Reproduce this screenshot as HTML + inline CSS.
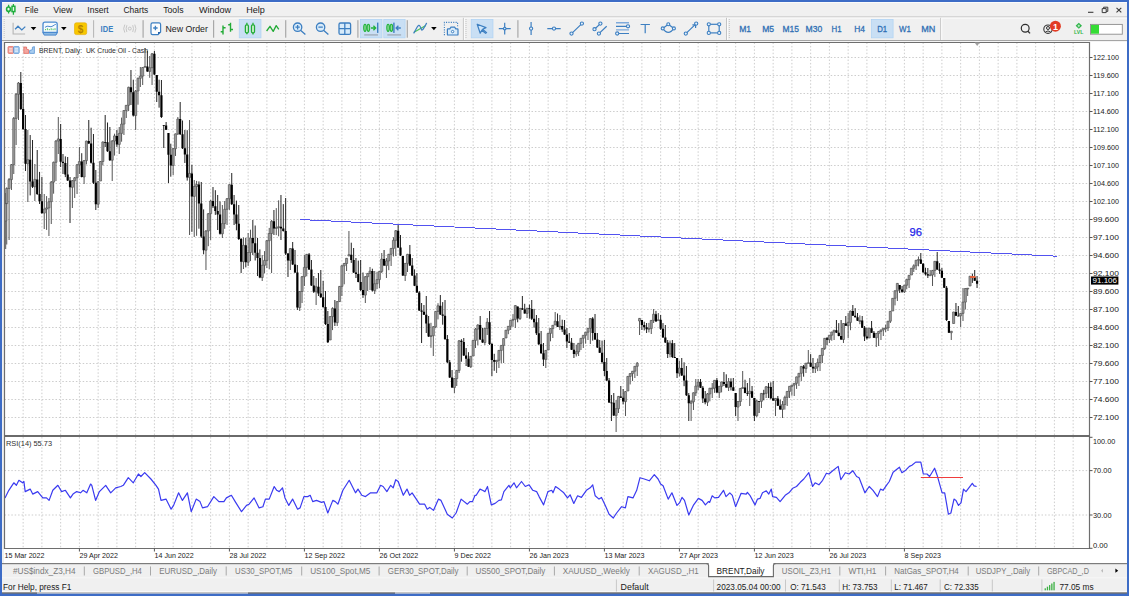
<!DOCTYPE html>
<html><head><meta charset="utf-8"><title>MT5</title>
<style>html,body{margin:0;padding:0;width:1129px;height:596px;overflow:hidden;background:#f0f0f0;font-family:"Liberation Sans", sans-serif;} svg{display:block;position:absolute;left:0;top:0;}</style>
</head><body>
<svg width="1129" height="596" viewBox="0 0 1129 596" font-family='"Liberation Sans", sans-serif'><rect x="0" y="0" width="1129" height="596" fill="#f0f0f0"/>
<rect x="2" y="2" width="1125" height="1" fill="#fbfbfb"/>
<rect x="2" y="16" width="1125" height="1.5" fill="#d6d6d6"/>
<rect x="2" y="17.5" width="1125" height="22.5" fill="#f0f0f0"/>
<rect x="2" y="17.8" width="1125" height="0.8" fill="#fcfcfc"/>
<rect x="2" y="40" width="1125" height="1.3" fill="#a5a5a5"/>
<rect x="2" y="41.3" width="1125" height="522" fill="#ffffff"/>
<rect x="2" y="41.3" width="2" height="522" fill="#f0f0f0"/>
<path d="M23.15 42.5V435M23.15 437V548.5M41.90 42.5V435M41.90 437V548.5M60.65 42.5V435M60.65 437V548.5M79.40 42.5V435M79.40 437V548.5M98.15 42.5V435M98.15 437V548.5M116.90 42.5V435M116.90 437V548.5M135.65 42.5V435M135.65 437V548.5M154.40 42.5V435M154.40 437V548.5M173.15 42.5V435M173.15 437V548.5M191.90 42.5V435M191.90 437V548.5M210.65 42.5V435M210.65 437V548.5M229.40 42.5V435M229.40 437V548.5M248.15 42.5V435M248.15 437V548.5M266.90 42.5V435M266.90 437V548.5M285.65 42.5V435M285.65 437V548.5M304.40 42.5V435M304.40 437V548.5M323.15 42.5V435M323.15 437V548.5M341.90 42.5V435M341.90 437V548.5M360.65 42.5V435M360.65 437V548.5M379.40 42.5V435M379.40 437V548.5M398.15 42.5V435M398.15 437V548.5M416.90 42.5V435M416.90 437V548.5M435.65 42.5V435M435.65 437V548.5M454.40 42.5V435M454.40 437V548.5M473.15 42.5V435M473.15 437V548.5M491.90 42.5V435M491.90 437V548.5M510.65 42.5V435M510.65 437V548.5M529.40 42.5V435M529.40 437V548.5M548.15 42.5V435M548.15 437V548.5M566.90 42.5V435M566.90 437V548.5M585.65 42.5V435M585.65 437V548.5M604.40 42.5V435M604.40 437V548.5M623.15 42.5V435M623.15 437V548.5M641.90 42.5V435M641.90 437V548.5M660.65 42.5V435M660.65 437V548.5M679.40 42.5V435M679.40 437V548.5M698.15 42.5V435M698.15 437V548.5M716.90 42.5V435M716.90 437V548.5M735.65 42.5V435M735.65 437V548.5M754.40 42.5V435M754.40 437V548.5M773.15 42.5V435M773.15 437V548.5M791.90 42.5V435M791.90 437V548.5M810.65 42.5V435M810.65 437V548.5M829.40 42.5V435M829.40 437V548.5M848.15 42.5V435M848.15 437V548.5M866.90 42.5V435M866.90 437V548.5M885.65 42.5V435M885.65 437V548.5M904.40 42.5V435M904.40 437V548.5M923.15 42.5V435M923.15 437V548.5M941.90 42.5V435M941.90 437V548.5M960.65 42.5V435M960.65 437V548.5M979.40 42.5V435M979.40 437V548.5M998.15 42.5V435M998.15 437V548.5M1016.90 42.5V435M1016.90 437V548.5M1035.65 42.5V435M1035.65 437V548.5M1054.40 42.5V435M1054.40 437V548.5M1073.15 42.5V435M1073.15 437V548.5M4.5 57.50H1089.5M4.5 75.50H1089.5M4.5 93.50H1089.5M4.5 111.50H1089.5M4.5 129.50H1089.5M4.5 147.50H1089.5M4.5 165.50H1089.5M4.5 183.50H1089.5M4.5 201.50H1089.5M4.5 219.50H1089.5M4.5 237.50H1089.5M4.5 255.50H1089.5M4.5 273.50H1089.5M4.5 291.50H1089.5M4.5 309.50H1089.5M4.5 327.50H1089.5M4.5 345.50H1089.5M4.5 363.50H1089.5M4.5 381.50H1089.5M4.5 399.50H1089.5M4.5 417.50H1089.5M4.5 470.6H1089.5M4.5 515.0H1089.5" stroke="#cdcdcd" stroke-width="1" stroke-dasharray="1.5 1.9" fill="none"/>
<path d="M5.70 193.0V249.0M6.74 187.3V244.5M9.09 178.0V240.0M11.43 164.0V190.0M13.78 117.0V174.0M16.12 93.0V145.0M18.46 82.0V120.0M27.84 130.0V202.0M34.87 164.0V201.0M44.24 194.0V229.0M46.59 196.1V229.9M48.93 198.0V236.0M51.27 181.0V224.0M53.62 161.6V193.7M55.96 140.0V181.0M58.31 117.0V154.0M72.37 180.0V208.0M74.71 177.0V198.0M77.06 164.0V194.0M79.40 147.0V174.0M84.09 160.0V184.0M86.43 140.7V164.4M98.15 181.0V208.0M100.49 161.0V181.0M102.84 141.4V165.4M112.21 140.0V181.0M114.56 133.7V155.6M119.24 127.0V154.0M121.59 117.6V141.7M123.93 110.0V135.0M126.28 105.0V118.0M128.62 86.7V111.0M135.65 90.0V130.0M137.99 77.6V104.7M140.34 67.0V87.0M142.68 67.0V85.0M145.03 48.0V67.0M149.71 56.0V77.8M152.06 53.0V85.0M173.15 148.0V175.0M175.49 133.5V156.0M177.84 117.0V135.0M189.56 120.0V235.0M194.24 180.0V237.0M196.59 180.9V235.8M205.96 230.0V270.0M208.31 213.0V246.2M210.65 200.0V240.0M222.37 205.0V238.0M224.71 201.0V228.8M227.06 198.0V225.0M229.40 184.2V209.9M243.46 237.4V269.0M248.15 233.0V266.0M250.49 229.7V261.1M262.21 255.0V281.0M264.56 251.1V273.4M266.90 240.0V268.0M269.24 227.9V269.3M271.59 220.0V273.0M276.27 208.1V235.1M278.62 200.3V236.3M290.34 248.0V270.0M299.71 291.0V311.0M302.06 276.0V303.0M304.40 255.0V286.0M306.74 253.9V276.3M316.12 278.0V305.0M330.18 316.0V340.0M332.52 307.3V330.1M337.21 301.0V326.0M339.56 286.0V302.0M341.90 265.0V296.0M344.24 262.9V284.3M346.59 258.0V271.0M348.93 231.0V256.0M365.34 276.0V303.0M367.68 273.0V291.0M370.02 267.0V290.0M374.71 271.0V294.0M377.06 271.8V289.1M379.40 271.0V288.0M381.74 253.0V273.0M386.43 258.0V278.0M388.77 253.9V270.2M391.12 248.0V266.0M393.46 237.2V256.5M395.81 230.0V256.0M405.18 263.0V281.0M407.52 253.9V272.0M430.96 322.8V347.8M433.31 326.0V356.0M435.65 311.0V328.0M437.99 303.2V319.4M454.40 378.0V393.0M456.74 370.0V386.0M459.09 340.0V373.0M470.81 356.0V368.0M473.15 340.0V356.0M475.49 328.0V348.0M477.84 324.2V345.1M484.87 328.0V345.0M487.21 318.0V335.0M496.59 360.0V373.0M498.93 350.0V368.0M501.27 345.0V363.2M503.62 338.0V363.0M505.96 330.0V338.0M508.31 326.1V334.2M510.65 320.0V330.0M512.99 314.1V326.9M515.34 305.0V328.0M520.02 308.0V320.0M527.06 308.0V318.0M545.81 350.0V368.0M548.15 333.0V350.0M550.49 328.3V341.3M552.84 325.0V338.0M555.18 312.0V325.0M559.87 315.0V330.0M576.27 344.7V356.5M578.62 343.0V356.0M580.96 338.0V350.0M583.31 335.0V348.0M585.65 331.9V343.7M587.99 328.0V340.0M590.34 318.0V344.0M616.12 400.0V432.0M618.46 396.0V413.0M625.49 391.0V416.0M627.84 376.0V391.0M630.18 373.1V384.4M632.52 371.0V381.0M634.87 366.0V378.0M637.21 362.0V376.0M639.56 318.0V335.0M648.93 322.9V332.4M651.27 320.0V334.0M653.62 309.0V323.0M658.31 313.0V320.0M670.02 340.5V357.4M679.40 360.7V376.4M691.12 400.0V421.0M693.46 392.4V410.0M695.81 379.0V396.0M698.15 379.0V390.1M707.52 393.0V406.0M709.87 387.9V401.3M712.21 383.0V398.0M714.56 380.0V392.9M719.24 386.0V398.0M721.59 381.6V392.4M728.62 378.0V391.0M737.99 401.0V421.0M740.34 388.0V406.0M742.68 371.0V388.0M749.71 378.0V406.0M756.74 399.8V417.0M761.43 393.0V408.0M766.12 386.0V398.0M775.49 398.0V416.0M782.52 401.0V418.0M784.87 395.7V409.6M787.21 391.0V406.0M789.56 386.0V398.0M791.90 384.8V395.7M794.24 383.0V396.0M796.59 376.6V388.9M798.93 373.0V386.0M801.27 366.0V381.0M805.96 363.0V373.0M808.31 350.0V363.0M815.34 363.0V373.0M817.68 358.5V371.1M820.02 355.0V371.0M822.37 348.0V363.0M824.71 338.0V350.0M829.40 335.0V343.0M831.74 331.8V340.7M834.09 330.0V340.0M843.46 323.0V343.0M848.15 313.0V338.0M850.49 310.7V330.2M859.87 315.4V324.2M869.24 328.0V338.0M876.27 333.0V347.0M878.62 331.0V346.0M880.96 329.7V340.0M883.31 328.0V336.0M885.65 324.6V332.0M887.99 321.0V331.0M890.34 311.0V323.0M892.68 298.0V311.0M895.02 290.4V305.4M897.37 283.0V301.0M904.40 285.0V293.0M906.74 278.7V289.3M909.09 275.0V288.0M911.43 268.0V275.0M913.77 264.3V272.0M916.12 260.0V270.0M918.46 256.5V266.3M930.18 270.0V275.0M932.52 270.0V286.0M934.87 261.0V276.9M951.27 331.0V340.0M953.62 311.8V323.5M960.65 313.0V327.0M962.99 288.0V321.0M965.34 288.1V309.5M967.68 288.0V296.0M970.02 276.0V286.0" stroke="#555" stroke-width="1" fill="none"/>
<path d="M4.65 203.6h2.1V221.0h-2.1zM5.69 188.5h2.1V203.6h-2.1zM8.04 179.6h2.1V188.5h-2.1zM10.38 164.7h2.1V179.6h-2.1zM12.72 118.4h2.1V164.7h-2.1zM15.07 94.3h2.1V118.4h-2.1zM17.41 83.0h2.1V94.3h-2.1zM26.79 159.7h2.1V163.8h-2.1zM33.82 179.4h2.1V186.8h-2.1zM43.19 209.1h2.1V213.1h-2.1zM45.54 207.9h2.1V209.1h-2.1zM47.88 201.7h2.1V207.9h-2.1zM50.23 182.1h2.1V201.7h-2.1zM52.57 162.3h2.1V182.1h-2.1zM54.91 141.0h2.1V162.3h-2.1zM57.26 138.9h2.1V141.0h-2.1zM71.32 180.7h2.1V187.3h-2.1zM73.66 177.8h2.1V180.7h-2.1zM76.01 164.8h2.1V177.8h-2.1zM78.35 161.6h2.1V164.8h-2.1zM83.04 160.6h2.1V176.9h-2.1zM85.38 141.1h2.1V160.6h-2.1zM97.10 181.7h2.1V204.2h-2.1zM99.44 161.5h2.1V181.0h-2.1zM101.79 142.0h2.1V161.5h-2.1zM111.16 141.0h2.1V160.2h-2.1zM113.51 135.9h2.1V141.0h-2.1zM118.19 133.4h2.1V144.4h-2.1zM120.54 124.1h2.1V133.4h-2.1zM122.88 110.6h2.1V124.1h-2.1zM125.23 105.3h2.1V110.6h-2.1zM127.57 87.3h2.1V105.3h-2.1zM134.60 91.0h2.1V115.6h-2.1zM136.94 78.3h2.1V91.0h-2.1zM139.29 76.1h2.1V78.3h-2.1zM141.63 67.5h2.1V76.1h-2.1zM143.97 66.5h2.1V67.3h-2.1zM148.66 67.7h2.1V71.4h-2.1zM151.01 53.8h2.1V67.7h-2.1zM172.10 148.7h2.1V165.5h-2.1zM174.44 133.9h2.1V148.7h-2.1zM176.79 119.0h2.1V133.9h-2.1zM188.51 173.4h2.1V177.4h-2.1zM193.19 186.5h2.1V196.4h-2.1zM195.54 184.5h2.1V186.5h-2.1zM204.91 231.0h2.1V250.2h-2.1zM207.26 213.7h2.1V231.0h-2.1zM209.60 201.0h2.1V213.7h-2.1zM221.32 223.6h2.1V233.8h-2.1zM223.66 209.3h2.1V223.6h-2.1zM226.01 198.7h2.1V209.3h-2.1zM228.35 184.7h2.1V198.7h-2.1zM242.41 245.3h2.1V261.7h-2.1zM247.10 252.5h2.1V262.2h-2.1zM249.44 238.0h2.1V252.5h-2.1zM261.16 265.3h2.1V277.5h-2.1zM263.51 260.4h2.1V265.3h-2.1zM265.85 240.7h2.1V260.4h-2.1zM268.19 233.5h2.1V240.7h-2.1zM270.54 221.3h2.1V233.5h-2.1zM275.22 227.4h2.1V228.5h-2.1zM277.57 226.7h2.1V227.5h-2.1zM289.29 248.6h2.1V260.4h-2.1zM298.66 291.5h2.1V307.6h-2.1zM301.01 276.7h2.1V291.5h-2.1zM303.35 267.4h2.1V276.7h-2.1zM305.69 254.4h2.1V267.4h-2.1zM315.07 286.8h2.1V291.7h-2.1zM329.13 316.6h2.1V340.0h-2.1zM331.47 308.4h2.1V316.6h-2.1zM336.16 301.6h2.1V322.6h-2.1zM338.51 286.4h2.1V301.6h-2.1zM340.85 265.8h2.1V286.4h-2.1zM343.19 263.5h2.1V265.8h-2.1zM345.54 258.3h2.1V263.5h-2.1zM347.88 254.7h2.1V256.0h-2.1zM364.29 276.7h2.1V295.1h-2.1zM366.63 273.4h2.1V276.7h-2.1zM368.97 271.1h2.1V273.4h-2.1zM373.66 283.7h2.1V290.6h-2.1zM376.01 279.6h2.1V283.7h-2.1zM378.35 271.4h2.1V279.6h-2.1zM380.69 259.1h2.1V271.4h-2.1zM385.38 260.9h2.1V265.6h-2.1zM387.72 254.3h2.1V260.9h-2.1zM390.07 248.4h2.1V254.3h-2.1zM392.41 240.3h2.1V248.4h-2.1zM394.76 230.7h2.1V240.3h-2.1zM404.13 263.4h2.1V275.5h-2.1zM406.47 254.3h2.1V263.4h-2.1zM429.91 335.7h2.1V336.5h-2.1zM432.26 326.8h2.1V335.7h-2.1zM434.60 311.4h2.1V326.8h-2.1zM436.94 305.8h2.1V311.4h-2.1zM453.35 378.6h2.1V387.6h-2.1zM455.69 370.4h2.1V378.6h-2.1zM458.04 340.8h2.1V370.4h-2.1zM469.76 356.3h2.1V366.7h-2.1zM472.10 340.4h2.1V356.0h-2.1zM474.44 329.1h2.1V340.4h-2.1zM476.79 325.0h2.1V329.1h-2.1zM483.82 328.4h2.1V342.5h-2.1zM486.16 322.2h2.1V328.4h-2.1zM495.54 360.3h2.1V361.7h-2.1zM497.88 350.4h2.1V360.3h-2.1zM500.22 345.4h2.1V350.4h-2.1zM502.57 338.6h2.1V345.4h-2.1zM504.91 330.2h2.1V338.0h-2.1zM507.26 326.3h2.1V330.2h-2.1zM509.60 320.2h2.1V326.3h-2.1zM511.94 319.4h2.1V320.2h-2.1zM514.29 305.6h2.1V319.4h-2.1zM518.98 308.3h2.1V318.5h-2.1zM526.01 308.2h2.1V313.4h-2.1zM544.76 350.4h2.1V359.4h-2.1zM547.10 333.4h2.1V350.0h-2.1zM549.44 328.6h2.1V333.4h-2.1zM551.79 325.3h2.1V328.6h-2.1zM554.13 321.2h2.1V325.0h-2.1zM558.82 326.1h2.1V326.9h-2.1zM575.23 351.7h2.1V354.0h-2.1zM577.57 343.3h2.1V351.7h-2.1zM579.91 338.3h2.1V343.3h-2.1zM582.26 335.3h2.1V338.3h-2.1zM584.60 332.2h2.1V335.3h-2.1zM586.94 328.3h2.1V332.2h-2.1zM589.29 318.6h2.1V328.3h-2.1zM615.07 408.7h2.1V415.4h-2.1zM617.41 396.4h2.1V408.7h-2.1zM624.44 391.6h2.1V401.6h-2.1zM626.79 376.4h2.1V391.0h-2.1zM629.13 373.6h2.1V376.4h-2.1zM631.48 371.2h2.1V373.6h-2.1zM633.82 366.3h2.1V371.2h-2.1zM636.16 363.2h2.1V366.3h-2.1zM638.51 318.4h2.1V321.0h-2.1zM647.88 328.4h2.1V329.3h-2.1zM650.23 320.4h2.1V328.4h-2.1zM652.57 314.2h2.1V320.4h-2.1zM657.26 319.8h2.1V320.6h-2.1zM668.98 343.2h2.1V354.1h-2.1zM678.35 368.0h2.1V373.2h-2.1zM690.07 401.7h2.1V403.3h-2.1zM692.41 392.8h2.1V401.7h-2.1zM694.76 386.1h2.1V392.8h-2.1zM697.10 382.0h2.1V386.1h-2.1zM706.48 393.9h2.1V402.2h-2.1zM708.82 388.2h2.1V393.9h-2.1zM711.16 388.1h2.1V388.9h-2.1zM713.51 380.3h2.1V388.1h-2.1zM718.19 386.3h2.1V392.6h-2.1zM720.54 381.9h2.1V386.3h-2.1zM727.57 381.6h2.1V387.4h-2.1zM736.94 401.5h2.1V407.1h-2.1zM739.29 388.4h2.1V401.5h-2.1zM741.63 387.6h2.1V388.4h-2.1zM748.66 391.2h2.1V393.6h-2.1zM755.69 400.9h2.1V415.7h-2.1zM760.38 393.4h2.1V401.3h-2.1zM765.07 386.8h2.1V393.4h-2.1zM774.44 398.4h2.1V400.5h-2.1zM781.48 404.6h2.1V409.4h-2.1zM783.82 397.4h2.1V404.6h-2.1zM786.16 391.4h2.1V397.4h-2.1zM788.51 386.3h2.1V391.4h-2.1zM790.85 385.1h2.1V386.3h-2.1zM793.19 383.3h2.1V385.1h-2.1zM795.54 376.9h2.1V383.3h-2.1zM797.88 373.3h2.1V376.9h-2.1zM800.23 366.4h2.1V373.3h-2.1zM804.91 363.2h2.1V368.6h-2.1zM807.26 362.7h2.1V363.5h-2.1zM814.29 366.9h2.1V368.6h-2.1zM816.63 362.6h2.1V366.9h-2.1zM818.98 355.4h2.1V362.6h-2.1zM821.32 348.4h2.1V355.4h-2.1zM823.66 338.3h2.1V348.4h-2.1zM828.35 335.2h2.1V339.7h-2.1zM830.69 332.0h2.1V335.2h-2.1zM833.04 330.2h2.1V332.0h-2.1zM842.41 323.5h2.1V339.5h-2.1zM847.10 322.4h2.1V325.8h-2.1zM849.44 311.1h2.1V322.4h-2.1zM858.82 320.6h2.1V321.4h-2.1zM868.19 328.2h2.1V338.0h-2.1zM875.23 333.4h2.1V337.8h-2.1zM877.57 331.4h2.1V333.4h-2.1zM879.91 329.9h2.1V331.4h-2.1zM882.26 328.2h2.1V329.9h-2.1zM884.60 327.9h2.1V328.7h-2.1zM886.94 321.2h2.1V327.9h-2.1zM889.29 311.3h2.1V321.2h-2.1zM891.63 298.3h2.1V311.0h-2.1zM893.98 290.8h2.1V298.3h-2.1zM896.32 283.4h2.1V290.8h-2.1zM903.35 285.2h2.1V291.8h-2.1zM905.69 279.6h2.1V285.2h-2.1zM908.04 275.3h2.1V279.6h-2.1zM910.38 268.2h2.1V275.0h-2.1zM912.73 265.8h2.1V268.2h-2.1zM915.07 260.2h2.1V265.8h-2.1zM917.41 259.5h2.1V260.3h-2.1zM929.13 274.9h2.1V275.7h-2.1zM931.48 270.4h2.1V274.9h-2.1zM933.82 261.3h2.1V270.4h-2.1zM950.23 331.2h2.1V332.7h-2.1zM952.57 312.0h2.1V323.5h-2.1zM959.60 313.4h2.1V315.8h-2.1zM961.94 302.1h2.1V313.4h-2.1zM964.29 288.5h2.1V302.1h-2.1zM966.63 288.2h2.1V289.0h-2.1zM968.98 276.2h2.1V286.0h-2.1z" fill="#9c9c9c" stroke="#505050" stroke-width="0.65"/>
<path d="M20.81 72.0V110.0M23.15 93.0V130.0M25.49 115.0V171.0M30.18 135.0V195.4M32.52 140.0V188.0M37.21 150.0V195.0M39.56 171.9V204.0M41.90 177.0V214.0M60.65 124.0V167.0M62.99 154.0V174.0M65.34 156.4V177.1M67.68 157.0V181.0M70.03 177.0V223.0M81.74 153.2V177.4M88.78 120.0V144.0M91.12 127.7V163.6M93.46 134.0V184.0M95.81 170.0V210.0M105.18 115.0V147.0M107.53 122.5V151.9M109.87 127.0V161.0M116.90 130.0V147.0M130.96 70.0V105.0M133.31 79.7V116.5M147.37 50.8V71.9M154.40 51.0V75.0M156.74 75.0V102.0M159.09 79.7V107.7M161.43 80.0V118.0M163.78 125.0V148.0M166.12 122.0V130.0M168.46 133.0V183.0M170.81 143.7V176.7M180.18 102.0V135.0M182.53 120.5V149.0M184.87 130.0V163.0M187.21 130.2V180.6M191.90 164.7V231.9M198.93 181.4V228.7M201.28 182.0V238.0M203.62 209.4V254.3M212.99 187.0V208.0M215.34 190.2V214.9M217.68 195.0V230.0M220.03 201.4V234.6M231.74 173.0V205.0M234.09 195.0V225.0M236.43 200.6V230.3M238.78 205.0V240.0M241.12 238.0V273.0M245.81 237.8V267.4M252.84 220.0V255.0M255.18 225.5V260.5M257.52 238.0V276.0M259.87 249.4V278.2M273.93 210.0V235.0M280.96 195.0V240.0M283.31 204.1V231.6M285.65 198.0V255.0M287.99 253.0V277.0M292.68 242.0V265.0M295.02 250.0V273.0M297.37 265.0V310.0M309.09 253.0V270.0M311.43 260.0V286.0M313.77 276.0V293.0M318.46 273.0V296.0M320.81 270.0V298.0M323.15 280.9V307.8M325.49 291.0V325.0M327.84 311.0V343.0M334.87 300.0V326.0M351.27 242.7V262.9M353.62 248.0V273.0M355.96 258.0V278.0M358.31 260.6V282.3M360.65 260.0V291.0M362.99 272.5V297.9M372.37 268.7V291.5M384.09 250.0V266.0M398.15 224.0V248.0M400.49 235.0V256.0M402.84 256.0V276.0M409.87 245.0V266.0M412.21 258.0V276.0M414.56 269.4V286.1M416.90 273.0V293.0M419.24 291.0V311.0M421.59 303.0V343.0M423.93 305.0V315.0M426.27 296.0V333.0M428.62 316.0V337.0M440.34 295.0V315.0M442.68 302.1V324.7M445.02 300.0V340.0M447.37 335.0V363.0M449.71 360.0V378.0M452.06 370.0V388.0M461.43 339.2V361.7M463.77 338.0V356.0M466.12 348.0V366.0M468.46 352.2V367.0M480.18 316.0V340.0M482.52 327.8V342.9M489.56 311.0V345.0M491.90 343.0V376.0M494.24 353.8V370.8M517.68 306.6V322.3M522.37 296.0V310.0M524.71 303.8V313.7M529.40 304.5V318.6M531.74 300.0V320.0M534.09 308.9V327.7M536.43 315.0V335.0M538.77 318.0V345.0M541.12 331.0V353.9M543.46 343.0V366.0M557.52 313.5V327.0M562.21 319.7V332.1M564.56 320.0V335.0M566.90 328.0V348.0M569.24 333.0V343.0M571.59 338.0V350.0M573.93 343.0V358.0M592.68 317.1V340.6M595.02 314.0V340.0M597.37 333.0V348.0M599.71 340.0V353.0M602.06 340.6V363.7M604.40 340.0V376.0M606.74 358.0V381.0M609.09 378.0V403.0M611.43 395.0V421.0M613.77 393.0V416.0M620.81 386.0V398.0M623.15 389.0V404.4M641.90 320.0V330.0M644.24 321.7V330.4M646.59 323.0V333.0M655.96 310.9V321.6M660.65 315.0V330.0M662.99 323.1V337.8M665.34 325.0V343.0M667.68 340.0V358.0M672.37 340.0V358.0M674.71 343.0V358.0M677.06 358.0V378.0M681.74 358.0V376.0M684.09 362.3V386.2M686.43 366.0V396.0M688.77 393.0V421.0M700.49 379.0V388.0M702.84 386.0V403.0M705.18 391.0V404.3M716.90 378.0V393.0M723.93 372.0V386.0M726.27 374.3V387.7M730.96 378.3V390.4M733.31 378.0V391.0M735.65 393.0V416.0M745.02 379.7V393.3M747.37 383.0V396.0M752.06 386.0V398.0M754.40 398.0V421.0M759.09 401.0V413.0M763.77 389.8V400.3M768.46 383.0V398.0M770.81 382.3V399.2M773.15 381.0V401.0M777.84 396.0V406.0M780.18 399.6V409.7M803.62 365.0V376.7M810.65 354.1V367.1M812.99 358.0V373.0M827.06 337.0V345.2M836.43 320.0V333.0M838.77 323.1V336.3M841.12 320.0V340.0M845.81 316.0V326.0M852.84 305.0V316.0M855.18 308.1V317.5M857.52 313.0V321.0M862.21 316.0V328.0M864.56 326.0V341.0M866.90 327.5V339.5M871.59 321.0V333.0M873.93 331.0V338.0M899.71 285.0V293.0M902.06 286.0V292.8M920.81 253.0V264.0M923.15 263.0V273.0M925.49 267.7V275.5M927.84 268.0V278.0M937.21 252.0V270.0M939.56 263.1V273.9M941.90 268.0V278.0M944.24 278.0V288.0M946.59 286.0V321.0M948.93 321.0V333.0M955.96 303.0V316.0M958.31 306.0V316.0M972.37 273.6V282.9M974.71 270.0V281.0M977.06 276.0V288.0" stroke="#222" stroke-width="1" fill="none"/>
<path d="M19.71 83.0h2.2V109.0h-2.2zM22.05 109.0h2.2V129.1h-2.2zM24.39 129.1h2.2V163.8h-2.2zM29.08 159.7h2.2V181.4h-2.2zM31.42 181.4h2.2V186.8h-2.2zM36.11 179.4h2.2V193.9h-2.2zM38.46 193.9h2.2V201.3h-2.2zM40.80 201.3h2.2V213.1h-2.2zM59.55 138.9h2.2V161.8h-2.2zM61.89 161.8h2.2V163.0h-2.2zM64.24 163.0h2.2V174.6h-2.2zM66.58 174.6h2.2V180.4h-2.2zM68.93 180.4h2.2V187.3h-2.2zM80.64 161.6h2.2V176.9h-2.2zM87.68 141.1h2.2V143.4h-2.2zM90.02 143.4h2.2V162.8h-2.2zM92.36 162.8h2.2V182.8h-2.2zM94.71 182.8h2.2V204.2h-2.2zM104.08 142.0h2.2V142.8h-2.2zM106.43 142.3h2.2V151.3h-2.2zM108.77 151.3h2.2V160.2h-2.2zM115.80 135.9h2.2V144.4h-2.2zM129.86 87.3h2.2V92.3h-2.2zM132.21 92.3h2.2V115.6h-2.2zM146.27 66.5h2.2V71.4h-2.2zM153.30 53.8h2.2V74.4h-2.2zM155.64 75.0h2.2V91.8h-2.2zM157.99 91.8h2.2V95.2h-2.2zM160.33 95.2h2.2V117.0h-2.2zM162.68 125.0h2.2V125.8h-2.2zM165.02 125.6h2.2V129.8h-2.2zM167.36 133.0h2.2V154.8h-2.2zM169.71 154.8h2.2V165.5h-2.2zM179.08 119.0h2.2V134.2h-2.2zM181.43 134.2h2.2V148.3h-2.2zM183.77 148.3h2.2V154.5h-2.2zM186.11 154.5h2.2V177.4h-2.2zM190.80 173.4h2.2V196.4h-2.2zM197.83 184.5h2.2V203.4h-2.2zM200.18 203.4h2.2V236.6h-2.2zM202.52 236.6h2.2V250.2h-2.2zM211.89 201.0h2.2V206.2h-2.2zM214.24 206.2h2.2V210.9h-2.2zM216.58 210.9h2.2V214.5h-2.2zM218.93 214.5h2.2V233.8h-2.2zM230.64 184.7h2.2V204.2h-2.2zM232.99 204.2h2.2V214.5h-2.2zM235.33 214.5h2.2V223.7h-2.2zM237.68 223.7h2.2V239.1h-2.2zM240.02 239.1h2.2V261.7h-2.2zM244.71 245.3h2.2V262.2h-2.2zM251.74 238.0h2.2V243.3h-2.2zM254.08 243.3h2.2V252.8h-2.2zM256.42 252.8h2.2V258.0h-2.2zM258.77 258.0h2.2V277.5h-2.2zM272.83 221.3h2.2V228.5h-2.2zM279.86 226.7h2.2V228.5h-2.2zM282.21 228.5h2.2V230.9h-2.2zM284.55 230.9h2.2V253.6h-2.2zM286.89 253.6h2.2V260.4h-2.2zM291.58 248.6h2.2V264.4h-2.2zM293.92 264.4h2.2V272.4h-2.2zM296.27 272.4h2.2V307.6h-2.2zM307.99 254.4h2.2V269.6h-2.2zM310.33 269.6h2.2V285.4h-2.2zM312.67 285.4h2.2V291.7h-2.2zM317.36 286.8h2.2V293.5h-2.2zM319.71 293.5h2.2V297.3h-2.2zM322.05 297.3h2.2V307.1h-2.2zM324.39 307.1h2.2V324.1h-2.2zM326.74 324.1h2.2V342.2h-2.2zM333.77 308.4h2.2V322.6h-2.2zM350.17 254.7h2.2V260.0h-2.2zM352.52 260.0h2.2V272.4h-2.2zM354.86 272.4h2.2V274.1h-2.2zM357.21 274.1h2.2V281.9h-2.2zM359.55 281.9h2.2V290.1h-2.2zM361.89 290.1h2.2V295.1h-2.2zM371.27 271.1h2.2V290.6h-2.2zM382.99 259.1h2.2V265.6h-2.2zM397.05 230.7h2.2V247.4h-2.2zM399.39 247.4h2.2V255.5h-2.2zM401.74 256.0h2.2V275.5h-2.2zM408.77 254.3h2.2V265.5h-2.2zM411.11 265.5h2.2V275.6h-2.2zM413.46 275.6h2.2V285.7h-2.2zM415.80 285.7h2.2V292.5h-2.2zM418.14 292.5h2.2V310.5h-2.2zM420.49 310.5h2.2V311.8h-2.2zM422.83 311.8h2.2V314.8h-2.2zM425.17 314.8h2.2V323.5h-2.2zM427.52 323.5h2.2V336.5h-2.2zM439.24 305.8h2.2V314.5h-2.2zM441.58 314.5h2.2V315.7h-2.2zM443.92 315.7h2.2V339.0h-2.2zM446.27 339.0h2.2V362.3h-2.2zM448.61 362.3h2.2V377.6h-2.2zM450.96 377.6h2.2V387.6h-2.2zM460.33 340.8h2.2V341.9h-2.2zM462.67 341.9h2.2V355.6h-2.2zM465.02 355.6h2.2V358.7h-2.2zM467.36 358.7h2.2V366.7h-2.2zM479.08 325.0h2.2V339.4h-2.2zM481.42 339.4h2.2V342.5h-2.2zM488.46 322.2h2.2V344.1h-2.2zM490.80 344.1h2.2V360.0h-2.2zM493.14 360.0h2.2V361.7h-2.2zM516.58 306.6h2.2V318.5h-2.2zM521.27 308.3h2.2V309.4h-2.2zM523.61 309.4h2.2V313.4h-2.2zM528.30 308.2h2.2V309.1h-2.2zM530.64 309.1h2.2V318.7h-2.2zM532.99 318.7h2.2V322.3h-2.2zM535.33 322.3h2.2V333.2h-2.2zM537.67 333.2h2.2V344.3h-2.2zM540.02 344.3h2.2V353.3h-2.2zM542.36 353.3h2.2V359.4h-2.2zM556.42 321.2h2.2V326.7h-2.2zM561.11 326.1h2.2V329.4h-2.2zM563.46 329.4h2.2V334.6h-2.2zM565.80 334.6h2.2V341.4h-2.2zM568.14 341.4h2.2V342.8h-2.2zM570.49 342.8h2.2V349.7h-2.2zM572.83 349.7h2.2V354.0h-2.2zM591.58 318.6h2.2V333.0h-2.2zM593.92 333.0h2.2V339.4h-2.2zM596.27 339.4h2.2V347.6h-2.2zM598.61 347.6h2.2V352.7h-2.2zM600.96 352.7h2.2V362.0h-2.2zM603.30 362.0h2.2V371.0h-2.2zM605.64 371.0h2.2V380.4h-2.2zM607.99 380.4h2.2V402.4h-2.2zM610.33 402.4h2.2V403.2h-2.2zM612.67 402.8h2.2V415.4h-2.2zM619.71 396.4h2.2V397.7h-2.2zM622.05 397.7h2.2V401.6h-2.2zM640.80 320.0h2.2V325.0h-2.2zM643.14 325.0h2.2V327.2h-2.2zM645.49 327.2h2.2V329.3h-2.2zM654.86 314.2h2.2V321.4h-2.2zM659.55 319.8h2.2V328.8h-2.2zM661.89 328.8h2.2V337.4h-2.2zM664.24 337.4h2.2V342.6h-2.2zM666.58 342.6h2.2V354.1h-2.2zM671.27 343.2h2.2V357.1h-2.2zM673.61 357.1h2.2V357.9h-2.2zM675.96 358.0h2.2V373.2h-2.2zM680.64 368.0h2.2V375.6h-2.2zM682.99 375.6h2.2V380.5h-2.2zM685.33 380.5h2.2V395.2h-2.2zM687.67 395.2h2.2V403.3h-2.2zM699.39 382.0h2.2V387.8h-2.2zM701.74 387.8h2.2V398.5h-2.2zM704.08 398.5h2.2V402.2h-2.2zM715.80 380.3h2.2V392.6h-2.2zM722.83 381.9h2.2V383.9h-2.2zM725.17 383.9h2.2V387.4h-2.2zM729.86 381.6h2.2V387.3h-2.2zM732.21 387.3h2.2V390.7h-2.2zM734.55 393.0h2.2V407.1h-2.2zM743.92 387.6h2.2V393.0h-2.2zM746.27 393.0h2.2V393.8h-2.2zM750.96 391.2h2.2V397.7h-2.2zM753.30 398.0h2.2V415.7h-2.2zM757.99 401.0h2.2V401.8h-2.2zM762.67 393.4h2.2V394.2h-2.2zM767.36 386.8h2.2V387.6h-2.2zM769.71 387.0h2.2V398.2h-2.2zM772.05 398.2h2.2V400.5h-2.2zM776.74 398.4h2.2V405.8h-2.2zM779.08 405.8h2.2V409.4h-2.2zM802.52 366.4h2.2V368.6h-2.2zM809.55 362.7h2.2V366.8h-2.2zM811.89 366.8h2.2V368.6h-2.2zM825.96 338.3h2.2V339.7h-2.2zM835.33 330.2h2.2V332.7h-2.2zM837.67 332.7h2.2V335.9h-2.2zM840.02 335.9h2.2V339.5h-2.2zM844.71 323.5h2.2V325.8h-2.2zM851.74 311.1h2.2V315.7h-2.2zM854.08 315.7h2.2V317.2h-2.2zM856.42 317.2h2.2V320.8h-2.2zM861.11 320.6h2.2V327.7h-2.2zM863.46 327.7h2.2V336.4h-2.2zM865.80 336.4h2.2V338.3h-2.2zM870.49 328.2h2.2V332.7h-2.2zM872.83 332.7h2.2V337.8h-2.2zM898.61 285.0h2.2V289.5h-2.2zM900.96 289.5h2.2V291.8h-2.2zM919.71 259.5h2.2V263.7h-2.2zM922.05 263.7h2.2V272.3h-2.2zM924.39 272.3h2.2V274.2h-2.2zM926.74 274.2h2.2V275.5h-2.2zM936.11 261.3h2.2V269.6h-2.2zM938.46 269.6h2.2V270.7h-2.2zM940.80 270.7h2.2V277.8h-2.2zM943.14 278.0h2.2V287.8h-2.2zM945.49 287.8h2.2V320.1h-2.2zM947.83 321.0h2.2V332.7h-2.2zM954.86 312.0h2.2V315.7h-2.2zM957.21 315.7h2.2V316.5h-2.2zM971.27 276.2h2.2V277.3h-2.2zM973.61 277.3h2.2V280.7h-2.2zM975.96 280.7h2.2V283.8h-2.2z" fill="#000"/>
<line x1="299.6" y1="219.5" x2="1056.8" y2="256.2" stroke="#5252f0" stroke-width="1" shape-rendering="crispEdges"/>
<text x="909.5" y="235.5" font-size="11.5" fill="#1c1ce8" textLength="12.5" lengthAdjust="spacingAndGlyphs" stroke="#1c1ce8" stroke-width="0.25">96</text>
<rect x="970" y="276" width="5.5" height="2" fill="#e0603a"/>
<polyline points="5.0,497.9 8.8,490.3 13.8,482.8 16.4,485.3 18.9,480.3 22.6,482.8 23.9,481.5 25.2,491.6 30.2,489.1 32.7,494.1 37.7,491.6 42.8,497.9 46.5,497.9 49.1,500.4 52.8,490.3 57.9,485.3 61.6,491.6 65.4,490.3 70.4,497.9 73.0,494.1 76.7,491.6 80.5,492.8 83.0,490.3 86.8,492.8 90.6,484.0 91.8,485.3 95.6,500.4 99.4,491.6 105.7,485.3 110.7,492.8 115.7,487.8 120.8,486.5 123.3,485.3 128.3,477.7 133.3,482.8 138.4,474.0 140.9,476.5 144.7,472.7 150.9,479.0 156.0,485.3 158.5,489.1 161.0,500.4 166.0,499.1 171.1,509.2 173.6,505.4 178.6,492.8 182.4,500.4 187.4,492.8 191.2,511.7 196.2,499.1 200.0,501.6 202.5,507.9 207.5,506.7 213.8,496.6 218.9,501.6 223.9,501.6 226.4,497.9 231.4,495.3 235.2,501.6 241.5,511.7 246.5,505.4 249.1,504.2 254.1,497.9 259.1,507.9 262.9,506.7 265.4,499.1 269.2,499.1 274.2,486.5 276.7,490.3 279.2,491.6 282.5,487.8 285.0,497.9 288.8,505.4 292.6,499.1 297.6,509.2 300.1,507.9 303.9,496.6 307.7,496.6 310.2,495.3 312.7,501.6 316.5,500.4 321.5,502.4 324.0,501.6 327.8,513.0 332.8,500.4 335.3,501.6 337.9,504.2 342.9,490.3 349.2,480.3 355.5,492.8 358.0,489.1 361.8,495.3 365.5,496.6 370.6,492.8 376.9,492.8 380.6,485.3 383.1,486.5 386.9,491.6 390.7,485.3 393.2,487.8 395.7,479.7 398.2,481.5 403.3,495.3 407.0,489.1 409.6,495.3 412.1,492.8 419.6,504.2 424.7,504.2 427.2,509.2 429.7,507.4 433.5,510.4 438.5,499.1 441.0,500.4 447.3,514.2 452.3,518.0 456.1,513.0 461.1,499.1 467.4,504.2 469.9,501.6 472.5,501.6 475.0,495.3 476.2,495.3 480.0,489.1 482.5,490.3 485.0,491.6 487.5,486.5 491.3,504.9 495.1,503.4 498.9,500.4 501.4,499.9 503.9,491.6 508.9,485.3 510.2,487.8 514.0,482.8 516.5,487.8 521.5,481.5 525.3,486.5 529.1,484.8 532.8,490.3 536.6,491.6 539.1,496.6 543.6,504.9 547.9,491.6 551.7,490.3 553.0,492.8 555.5,486.5 559.2,489.1 563.8,492.8 567.5,497.9 570.1,494.8 573.8,503.4 577.6,495.8 581.4,497.4 586.4,490.3 590.2,487.8 592.7,484.8 595.2,495.8 599.0,499.1 601.5,497.4 605.3,505.4 609.1,514.2 613.3,518.0 616.6,513.0 621.6,506.7 625.4,507.9 627.9,496.6 633.0,497.9 636.7,490.3 640.0,477.7 644.3,479.0 649.3,480.8 654.3,474.7 658.1,479.0 660.6,484.0 663.1,485.8 668.2,499.1 671.9,492.8 677.0,505.4 679.5,502.9 682.0,497.4 684.5,500.4 688.8,515.0 693.3,505.4 698.4,498.4 702.1,500.4 705.4,504.9 708.4,501.6 709.7,502.4 712.2,495.8 714.7,497.9 718.5,497.4 723.5,490.3 726.0,496.6 729.8,492.8 732.3,495.3 735.6,506.7 741.1,493.3 746.2,494.1 747.4,492.3 749.9,495.3 755.0,504.9 757.5,499.1 760.0,498.4 762.5,492.8 766.3,490.8 768.8,494.1 771.3,489.1 772.6,496.6 776.4,497.4 780.1,501.6 785.2,495.3 788.9,492.8 792.7,488.3 796.5,486.5 800.3,482.3 803.8,479.0 808.8,472.7 812.6,486.5 815.1,482.8 818.9,484.8 822.6,480.3 826.4,473.2 828.9,474.0 832.7,470.7 838.2,466.4 840.8,479.7 845.3,472.7 849.1,474.0 852.8,470.7 856.6,476.5 859.1,477.7 864.9,492.8 869.2,486.5 873.0,490.3 877.5,496.6 880.5,489.1 883.0,490.3 886.8,484.8 889.3,481.5 893.1,472.2 895.6,470.2 899.4,467.2 901.9,472.7 905.7,470.2 909.4,466.4 911.9,465.2 915.7,462.1 920.8,462.1 923.3,474.0 927.0,474.0 929.6,476.5 934.6,468.2 937.1,475.2 942.1,492.8 944.7,492.8 948.4,514.2 950.9,513.0 954.0,499.1 956.0,500.4 958.5,505.4 961.0,502.9 963.5,489.1 966.0,491.6 972.3,483.3 974.1,485.8 976.6,486.5" stroke="#3a3af0" stroke-width="1.2" fill="none" stroke-linejoin="round"/>
<line x1="920.8" y1="477.5" x2="963" y2="477.5" stroke="#f03c3c" stroke-width="1"/>
<path d="M4.5 42.5H1089.5V548.5H4.5Z" stroke="#6e6e6e" stroke-width="1.2" fill="none"/>
<rect x="4.5" y="435" width="1085.0" height="2" fill="#6a6a6a"/>
<path d="M974.6 42.5h5.2l-2.6 3.5z" fill="#a0a0a0"/>
<rect x="1089.5" y="57.0" width="3" height="1" fill="#555"/>
<text x="1093" y="60.1" font-size="7.2" fill="#202020" textLength="25.9" lengthAdjust="spacingAndGlyphs">122.100</text>
<rect x="1089.5" y="75.0" width="3" height="1" fill="#555"/>
<text x="1093" y="78.1" font-size="7.2" fill="#202020" textLength="25.9" lengthAdjust="spacingAndGlyphs">119.600</text>
<rect x="1089.5" y="93.0" width="3" height="1" fill="#555"/>
<text x="1093" y="96.1" font-size="7.2" fill="#202020" textLength="25.9" lengthAdjust="spacingAndGlyphs">117.100</text>
<rect x="1089.5" y="111.0" width="3" height="1" fill="#555"/>
<text x="1093" y="114.1" font-size="7.2" fill="#202020" textLength="25.9" lengthAdjust="spacingAndGlyphs">114.600</text>
<rect x="1089.5" y="129.0" width="3" height="1" fill="#555"/>
<text x="1093" y="132.1" font-size="7.2" fill="#202020" textLength="25.9" lengthAdjust="spacingAndGlyphs">112.100</text>
<rect x="1089.5" y="147.0" width="3" height="1" fill="#555"/>
<text x="1093" y="150.1" font-size="7.2" fill="#202020" textLength="25.9" lengthAdjust="spacingAndGlyphs">109.600</text>
<rect x="1089.5" y="165.0" width="3" height="1" fill="#555"/>
<text x="1093" y="168.1" font-size="7.2" fill="#202020" textLength="25.9" lengthAdjust="spacingAndGlyphs">107.100</text>
<rect x="1089.5" y="183.0" width="3" height="1" fill="#555"/>
<text x="1093" y="186.1" font-size="7.2" fill="#202020" textLength="25.9" lengthAdjust="spacingAndGlyphs">104.600</text>
<rect x="1089.5" y="201.0" width="3" height="1" fill="#555"/>
<text x="1093" y="204.1" font-size="7.2" fill="#202020" textLength="25.9" lengthAdjust="spacingAndGlyphs">102.100</text>
<rect x="1089.5" y="219.0" width="3" height="1" fill="#555"/>
<text x="1093" y="222.1" font-size="7.2" fill="#202020" textLength="25.9" lengthAdjust="spacingAndGlyphs">99.600</text>
<rect x="1089.5" y="237.0" width="3" height="1" fill="#555"/>
<text x="1093" y="240.1" font-size="7.2" fill="#202020" textLength="25.9" lengthAdjust="spacingAndGlyphs">97.100</text>
<rect x="1089.5" y="255.0" width="3" height="1" fill="#555"/>
<text x="1093" y="258.1" font-size="7.2" fill="#202020" textLength="25.9" lengthAdjust="spacingAndGlyphs">94.600</text>
<rect x="1089.5" y="273.0" width="3" height="1" fill="#555"/>
<text x="1093" y="276.1" font-size="7.2" fill="#202020" textLength="25.9" lengthAdjust="spacingAndGlyphs">92.100</text>
<rect x="1089.5" y="291.0" width="3" height="1" fill="#555"/>
<text x="1093" y="294.1" font-size="7.2" fill="#202020" textLength="25.9" lengthAdjust="spacingAndGlyphs">89.600</text>
<rect x="1089.5" y="309.0" width="3" height="1" fill="#555"/>
<text x="1093" y="312.1" font-size="7.2" fill="#202020" textLength="25.9" lengthAdjust="spacingAndGlyphs">87.100</text>
<rect x="1089.5" y="327.0" width="3" height="1" fill="#555"/>
<text x="1093" y="330.1" font-size="7.2" fill="#202020" textLength="25.9" lengthAdjust="spacingAndGlyphs">84.600</text>
<rect x="1089.5" y="345.0" width="3" height="1" fill="#555"/>
<text x="1093" y="348.1" font-size="7.2" fill="#202020" textLength="25.9" lengthAdjust="spacingAndGlyphs">82.100</text>
<rect x="1089.5" y="363.0" width="3" height="1" fill="#555"/>
<text x="1093" y="366.1" font-size="7.2" fill="#202020" textLength="25.9" lengthAdjust="spacingAndGlyphs">79.600</text>
<rect x="1089.5" y="381.0" width="3" height="1" fill="#555"/>
<text x="1093" y="384.1" font-size="7.2" fill="#202020" textLength="25.9" lengthAdjust="spacingAndGlyphs">77.100</text>
<rect x="1089.5" y="399.0" width="3" height="1" fill="#555"/>
<text x="1093" y="402.1" font-size="7.2" fill="#202020" textLength="25.9" lengthAdjust="spacingAndGlyphs">74.600</text>
<rect x="1089.5" y="417.0" width="3" height="1" fill="#555"/>
<text x="1093" y="420.1" font-size="7.2" fill="#202020" textLength="25.9" lengthAdjust="spacingAndGlyphs">72.100</text>
<rect x="1091" y="276.5" width="27.4" height="8.1" fill="#000"/>
<text x="1092.5" y="283.3" font-size="7.2" fill="#fff" textLength="24.5" lengthAdjust="spacingAndGlyphs">91.106</text>
<rect x="1089.5" y="436.8" width="3" height="1" fill="#555"/>
<text x="1093" y="443.8" font-size="7.2" fill="#202020" textLength="22.2" lengthAdjust="spacingAndGlyphs">100.00</text>
<rect x="1089.5" y="470.1" width="3" height="1" fill="#555"/>
<text x="1093" y="473.20000000000005" font-size="7.2" fill="#202020" textLength="18.5" lengthAdjust="spacingAndGlyphs">70.00</text>
<rect x="1089.5" y="514.5" width="3" height="1" fill="#555"/>
<text x="1093" y="517.6" font-size="7.2" fill="#202020" textLength="18.5" lengthAdjust="spacingAndGlyphs">30.00</text>
<rect x="1089.5" y="547.8" width="3" height="1" fill="#555"/>
<text x="1093" y="547.8" font-size="7.2" fill="#202020" textLength="14.8" lengthAdjust="spacingAndGlyphs">0.00</text>
<text x="6" y="445.8" font-size="7.3" fill="#303030" textLength="46" lengthAdjust="spacingAndGlyphs">RSI(14) 55.73</text>
<text x="4.6000000000000005" y="558.0" font-size="7.1" fill="#202020">15 Mar 2022</text>
<rect x="78.9" y="548.5" width="1" height="3" fill="#555"/>
<text x="79.60000000000001" y="558.0" font-size="7.1" fill="#202020">29 Apr 2022</text>
<rect x="153.9" y="548.5" width="1" height="3" fill="#555"/>
<text x="154.6" y="558.0" font-size="7.1" fill="#202020">14 Jun 2022</text>
<rect x="228.9" y="548.5" width="1" height="3" fill="#555"/>
<text x="229.6" y="558.0" font-size="7.1" fill="#202020">28 Jul 2022</text>
<rect x="303.9" y="548.5" width="1" height="3" fill="#555"/>
<text x="304.59999999999997" y="558.0" font-size="7.1" fill="#202020">12 Sep 2022</text>
<rect x="378.9" y="548.5" width="1" height="3" fill="#555"/>
<text x="379.59999999999997" y="558.0" font-size="7.1" fill="#202020">26 Oct 2022</text>
<rect x="453.9" y="548.5" width="1" height="3" fill="#555"/>
<text x="454.59999999999997" y="558.0" font-size="7.1" fill="#202020">9 Dec 2022</text>
<rect x="528.9" y="548.5" width="1" height="3" fill="#555"/>
<text x="529.6" y="558.0" font-size="7.1" fill="#202020">26 Jan 2023</text>
<rect x="603.9" y="548.5" width="1" height="3" fill="#555"/>
<text x="604.6" y="558.0" font-size="7.1" fill="#202020">13 Mar 2023</text>
<rect x="678.9" y="548.5" width="1" height="3" fill="#555"/>
<text x="679.6" y="558.0" font-size="7.1" fill="#202020">27 Apr 2023</text>
<rect x="753.9" y="548.5" width="1" height="3" fill="#555"/>
<text x="754.6" y="558.0" font-size="7.1" fill="#202020">12 Jun 2023</text>
<rect x="828.9" y="548.5" width="1" height="3" fill="#555"/>
<text x="829.6" y="558.0" font-size="7.1" fill="#202020">26 Jul 2023</text>
<rect x="903.9" y="548.5" width="1" height="3" fill="#555"/>
<text x="904.6" y="558.0" font-size="7.1" fill="#202020">8 Sep 2023</text>
<text x="39" y="53" font-size="7.9" fill="#2a2a2a" textLength="109" lengthAdjust="spacingAndGlyphs">BRENT, Daily:  UK Crude Oil - Cash</text>
<rect x="2" y="563" width="1125" height="1.4" fill="#7c7c7c"/>
<rect x="2" y="564.5" width="1125" height="13" fill="#f0f0f0"/>
<rect x="2" y="577.5" width="1125" height="1" fill="#fafafa"/>
<path d="M708.7 562.9V576.6H773.4V562.9Z" fill="#fff"/>
<path d="M706.5 563.7Q708.6 563.7 708.6 565.7V576.6H773.4V565.7Q773.4 563.7 775.5 563.7" fill="none" stroke="#6a6a6a" stroke-width="1.1"/>
<rect x="83.8" y="566.5" width="1" height="9" fill="#a8a8a8"/>
<rect x="150.0" y="566.5" width="1" height="9" fill="#a8a8a8"/>
<rect x="225.7" y="566.5" width="1" height="9" fill="#a8a8a8"/>
<rect x="301.2" y="566.5" width="1" height="9" fill="#a8a8a8"/>
<rect x="378.6" y="566.5" width="1" height="9" fill="#a8a8a8"/>
<rect x="466.7" y="566.5" width="1" height="9" fill="#a8a8a8"/>
<rect x="553.9" y="566.5" width="1" height="9" fill="#a8a8a8"/>
<rect x="638.7" y="566.5" width="1" height="9" fill="#a8a8a8"/>
<rect x="839.3" y="566.5" width="1" height="9" fill="#a8a8a8"/>
<rect x="885.1" y="566.5" width="1" height="9" fill="#a8a8a8"/>
<rect x="967.7" y="566.5" width="1" height="9" fill="#a8a8a8"/>
<rect x="1038.2" y="566.5" width="1" height="9" fill="#a8a8a8"/>
<text x="12.9" y="574.4" font-size="8.3" fill="#7a7a7a" textLength="62.7" lengthAdjust="spacingAndGlyphs">#US$indx_Z3,H4</text>
<text x="93" y="574.4" font-size="8.3" fill="#7a7a7a" textLength="48.9" lengthAdjust="spacingAndGlyphs">GBPUSD_,H4</text>
<text x="159.2" y="574.4" font-size="8.3" fill="#7a7a7a" textLength="57.8" lengthAdjust="spacingAndGlyphs">EURUSD_,Daily</text>
<text x="235.1" y="574.4" font-size="8.3" fill="#7a7a7a" textLength="57.2" lengthAdjust="spacingAndGlyphs">US30_SPOT,M5</text>
<text x="310.2" y="574.4" font-size="8.3" fill="#7a7a7a" textLength="60.2" lengthAdjust="spacingAndGlyphs">US100_Spot,M5</text>
<text x="387.8" y="574.4" font-size="8.3" fill="#7a7a7a" textLength="70.7" lengthAdjust="spacingAndGlyphs">GER30_SPOT,Daily</text>
<text x="475.4" y="574.4" font-size="8.3" fill="#7a7a7a" textLength="69.9" lengthAdjust="spacingAndGlyphs">US500_SPOT,Daily</text>
<text x="562.8" y="574.4" font-size="8.3" fill="#7a7a7a" textLength="67" lengthAdjust="spacingAndGlyphs">XAUUSD_,Weekly</text>
<text x="647.9" y="574.4" font-size="8.3" fill="#7a7a7a" textLength="50.8" lengthAdjust="spacingAndGlyphs">XAGUSD_,H1</text>
<text x="716.6" y="574.4" font-size="8.3" fill="#1a1a1a" textLength="47.9" lengthAdjust="spacingAndGlyphs">BRENT,Daily</text>
<text x="781.8" y="574.4" font-size="8.3" fill="#7a7a7a" textLength="49.2" lengthAdjust="spacingAndGlyphs">USOIL_Z3,H1</text>
<text x="848.4" y="574.4" font-size="8.3" fill="#7a7a7a" textLength="28.1" lengthAdjust="spacingAndGlyphs">WTI,H1</text>
<text x="894.3" y="574.4" font-size="8.3" fill="#7a7a7a" textLength="64.5" lengthAdjust="spacingAndGlyphs">NatGas_SPOT,H4</text>
<text x="975.7" y="574.4" font-size="8.3" fill="#7a7a7a" textLength="54.5" lengthAdjust="spacingAndGlyphs">USDJPY_,Daily</text>
<text x="1046.9" y="574.4" font-size="8.3" fill="#7a7a7a" textLength="42" lengthAdjust="spacingAndGlyphs">GBPCAD_,D</text>
<path d="M1101 570.7l2 -2v4z" fill="#bbb"/>
<path d="M1115.4 568.6l2.8 2.1-2.8 2.1z" fill="#000"/>
<rect x="2" y="578.5" width="1125" height="14.5" fill="#f0f0f0"/>
<rect x="2" y="591.3" width="1125" height="1" fill="#fbfbfb"/>
<rect x="2" y="592.5" width="1125" height="1.2" fill="#3a3a3a"/>
<rect x="37" y="592.5" width="211" height="1.2" fill="#f4f4f4"/>
<rect x="395" y="592.5" width="35" height="1.2" fill="#f4f4f4"/>
<text x="3" y="589.8" font-size="9.6" fill="#1a1a1a" textLength="68.4" lengthAdjust="spacingAndGlyphs">For Help, press F1</text>
<text x="620.6" y="589.8" font-size="9.6" fill="#1a1a1a" textLength="28" lengthAdjust="spacingAndGlyphs">Default</text>
<text x="716.6" y="589.8" font-size="9.6" fill="#1a1a1a" textLength="64" lengthAdjust="spacingAndGlyphs">2023.05.04 00:00</text>
<text x="790.3" y="589.8" font-size="9.6" fill="#1a1a1a" textLength="35.5" lengthAdjust="spacingAndGlyphs">O: 71.543</text>
<text x="842.2" y="589.8" font-size="9.6" fill="#1a1a1a" textLength="35.3" lengthAdjust="spacingAndGlyphs">H: 73.753</text>
<text x="894.3" y="589.8" font-size="9.6" fill="#1a1a1a" textLength="33.5" lengthAdjust="spacingAndGlyphs">L: 71.467</text>
<text x="944" y="589.8" font-size="9.6" fill="#1a1a1a" textLength="34.6" lengthAdjust="spacingAndGlyphs">C: 72.335</text>
<text x="1059.4" y="589.8" font-size="9.6" fill="#1a1a1a" textLength="34.2" lengthAdjust="spacingAndGlyphs">77.05 ms</text>
<rect x="615.9" y="579.5" width="1" height="12" fill="#c8c8c8"/>
<rect x="713.1" y="579.5" width="1" height="12" fill="#c8c8c8"/>
<rect x="785.0" y="579.5" width="1" height="12" fill="#c8c8c8"/>
<rect x="838.8" y="579.5" width="1" height="12" fill="#c8c8c8"/>
<rect x="890.8" y="579.5" width="1" height="12" fill="#c8c8c8"/>
<rect x="939.7" y="579.5" width="1" height="12" fill="#c8c8c8"/>
<rect x="991.8" y="579.5" width="1" height="12" fill="#c8c8c8"/>
<rect x="1041.4" y="579.5" width="1" height="12" fill="#c8c8c8"/>
<rect x="1044.6" y="588.3" width="1.3" height="2.0" fill="#3cb043"/>
<rect x="1046.8" y="586.7" width="1.3" height="3.6" fill="#3cb043"/>
<rect x="1049.0" y="585.1" width="1.3" height="5.2" fill="#3cb043"/>
<rect x="1051.2" y="583.5" width="1.3" height="6.8" fill="#3cb043"/>
<rect x="1053.4" y="581.9" width="1.3" height="8.4" fill="#3cb043"/>
<text x="24.8" y="12.8" font-size="9" fill="#1a1a1a" textLength="13.6" lengthAdjust="spacingAndGlyphs">File</text>
<text x="53.3" y="12.8" font-size="9" fill="#1a1a1a" textLength="19.1" lengthAdjust="spacingAndGlyphs">View</text>
<text x="87.3" y="12.8" font-size="9" fill="#1a1a1a" textLength="21.3" lengthAdjust="spacingAndGlyphs">Insert</text>
<text x="123.5" y="12.8" font-size="9" fill="#1a1a1a" textLength="24.8" lengthAdjust="spacingAndGlyphs">Charts</text>
<text x="163.2" y="12.8" font-size="9" fill="#1a1a1a" textLength="20.3" lengthAdjust="spacingAndGlyphs">Tools</text>
<text x="198.9" y="12.8" font-size="9" fill="#1a1a1a" textLength="32.2" lengthAdjust="spacingAndGlyphs">Window</text>
<text x="246.3" y="12.8" font-size="9" fill="#1a1a1a" textLength="18.6" lengthAdjust="spacingAndGlyphs">Help</text>
<g id="icons">
<!-- MT5 logo -->
<g stroke="#1fae3d" fill="none">
<path d="M8.6 4.8V13.4M13.4 4V14.8" stroke-width="1.3"/>
<ellipse cx="8.5" cy="9.2" rx="1.9" ry="2.2" stroke-width="1.6" fill="#e8f8ea"/>
<rect x="12" y="6.3" width="2.9" height="5.3" stroke-width="1.5" fill="#e8f8ea"/>
</g>
<!-- window controls -->
<path d="M1088 12.3H1093.4" stroke="#3a3a3a" stroke-width="1.1"/>
<path d="M1102.2 8.6h4v4h-4z M1103.6 8.6V7.2h4.2v4.2h-1.6" stroke="#3a3a3a" stroke-width="1" fill="none"/>
<path d="M1116.5 7.8l4.8 4.6M1121.3 7.8l-4.8 4.6" stroke="#3a3a3a" stroke-width="1.1"/>

<!-- toolbar grip -->
<path d="M4.2 19V39" stroke="#c4c4c4" stroke-width="1" stroke-dasharray="1 1"/>
<!-- line chart dropdown -->
<path d="M13.1 22.8V34H25.1" stroke="#b4b4b4" stroke-width="1.1" fill="none"/>
<path d="M15.1 29.2L18 26.2L21.8 29.9L25.3 26.6" stroke="#3d7fc1" stroke-width="1.3" fill="none"/>
<path d="M30.7 27.1h5.6l-2.8 3.2z" fill="#000"/>
<!-- template -->
<path d="M43 24.2q0-2 2-2h10.2q2 0 2 2v8.3h-14.2z" fill="#f6fafd" stroke="#4a8ad0" stroke-width="1.3"/>
<path d="M43 32.5h14.2l-1.2 2.6h-11.8z" fill="#8cb9e2" stroke="#4a8ad0" stroke-width="1"/>
<path d="M45 27.4q2-2 4-1t4-.5 2.8-1.5" stroke="#4a8ad0" stroke-width="1" fill="none"/>
<path d="M45.5 30.2v-1.2M47.4 30.2v-2M49.3 30.2v-1.2M51.2 30.2v-2M53.1 30.2v-1.5M55 30.2v-2" stroke="#49c25a" stroke-width="0.9"/>
<path d="M61 27.1h5.6l-2.8 3.2z" fill="#000"/>
<!-- dollar -->
<rect x="74.5" y="22.8" width="12.2" height="11.8" rx="1.8" fill="#f8c700" stroke="#e4aa00" stroke-width="0.6"/>
<text x="80.6" y="32.6" font-size="10" font-weight="bold" text-anchor="middle" fill="#b58400">$</text>
<!-- sep -->
<rect x="93.1" y="20.2" width="1" height="17.5" fill="#b4b4b4"/>
<!-- IDE -->
<text x="100.6" y="31.8" font-size="9.4" font-weight="bold" fill="#3b80c2" textLength="12.6" lengthAdjust="spacingAndGlyphs">IDE</text>
<!-- radio -->
<g stroke="#c2c2c2" stroke-width="0.9" fill="none">
<circle cx="129.8" cy="28.6" r="1.5"/>
<path d="M126.9 25.2q-1.6 3.4 0 6.8M132.7 25.2q1.6 3.4 0 6.8M124.8 24.6q-2.2 4 0 8M134.8 24.6q2.2 4 0 8"/>
</g>
<rect x="142.5" y="20.2" width="1.2" height="17.5" fill="#a8a8a8"/>
<!-- new order -->
<path d="M152.6 22.8h6.4q1.6 0 1.6 1.6v7.6l-2.6 2.6h-5.4q-1.6 0-1.6-1.6v-8.6q0-1.6 1.6-1.6z" fill="#fdfdfd" stroke="#3d7fc1" stroke-width="1.2"/>
<path d="M160.6 32l-2.6 2.6v-2.6z" fill="#1f5fa8"/>
<path d="M155.4 25.8v4.5M153.2 28h4.4" stroke="#3d7fc1" stroke-width="1.3"/>
<text x="165.5" y="31.9" font-size="8.8" fill="#1a1a1a" textLength="42.3" lengthAdjust="spacingAndGlyphs">New Order</text>
<rect x="213" y="20.2" width="1.2" height="17.5" fill="#a8a8a8"/>
<!-- bar chart -->
<path d="M223 25.4V34.4M220.7 31.8H223M223 27.7H225.6M230.5 22.8V31.8M228.2 24.7H230.5M230.5 29.5H233" stroke="#22ab36" stroke-width="1.4" fill="none"/>
<!-- candles selected -->
<rect x="239.2" y="19.3" width="21.8" height="18.6" fill="#c9dff4" stroke="#a9d0f5" stroke-width="0.6"/>
<path d="M246.9 22.8V34.2M253 22.8V34.4" stroke="#22ab36" stroke-width="1.3"/>
<rect x="245.4" y="24.8" width="3" height="8" rx="1.2" fill="#d6f5d6" stroke="#22ab36" stroke-width="1.3"/>
<rect x="251.5" y="24.8" width="3" height="8" rx="1.2" fill="#d6f5d6" stroke="#22ab36" stroke-width="1.3"/>
<!-- line -->
<path d="M266.6 31L270 26.3L273.2 31.4L276.2 25.6L278.8 29.4" stroke="#22ab36" stroke-width="1.3" fill="none" stroke-linejoin="round"/>
<rect x="285.1" y="20.2" width="1.2" height="17.5" fill="#a8a8a8"/>
<!-- zoom in / out -->
<g stroke="#3d7fc1" stroke-width="1.3" fill="#d8ebfa">
<circle cx="297.6" cy="27.2" r="4.2"/>
<circle cx="320.6" cy="27.2" r="4.2"/>
</g>
<path d="M300.8 30.4l4.6 4M323.8 30.4l4.6 4M295.4 27.2h4.4M297.6 25v4.4M318.4 27.2h4.4" stroke="#3d7fc1" stroke-width="1.3"/>
<!-- tile -->
<rect x="339" y="23" width="11.6" height="11.4" rx="1.5" fill="#d8ebfa" stroke="#3d7fc1" stroke-width="1.3"/>
<path d="M344.8 23v11.4M339 28.7h11.6" stroke="#3d7fc1" stroke-width="1.3"/>
<rect x="357.3" y="20.2" width="1.2" height="17.5" fill="#a8a8a8"/>
<!-- autoscroll / shift selected -->
<rect x="360.6" y="19.3" width="21.4" height="18.6" fill="#c9dff4" stroke="#a9d0f5" stroke-width="0.6"/>
<rect x="383.8" y="19.3" width="21.3" height="18.6" fill="#c9dff4" stroke="#a9d0f5" stroke-width="0.6"/>
<g fill="#8fd89a" stroke="#22b33a" stroke-width="1.1">
<ellipse cx="365" cy="27.8" rx="1.3" ry="3.6"/><ellipse cx="368.4" cy="27.8" rx="1.3" ry="3.6"/>
<ellipse cx="388.1" cy="27.8" rx="1.3" ry="3.6"/><ellipse cx="391.4" cy="27.8" rx="1.3" ry="3.6"/>
</g>
<path d="M371 28h4.3M373.4 25.8l2.3 2.2-2.3 2.2" stroke="#22b33a" stroke-width="1.3" fill="none"/>
<rect x="377" y="22.6" width="1.4" height="10.3" fill="#3d7fc1"/>
<rect x="393.2" y="22.6" width="1.4" height="10.3" fill="#3d7fc1"/>
<path d="M396.2 28h4.6M398.4 25.8l-2.3 2.2 2.3 2.2" stroke="#3d7fc1" stroke-width="1.3" fill="none"/>
<rect x="364.2" y="34.1" width="13.8" height="1.6" fill="#a7b4c2"/>
<rect x="387.3" y="34.1" width="13.8" height="1.6" fill="#a7b4c2"/>
<rect x="406.7" y="20.2" width="1.2" height="17.5" fill="#a8a8a8"/>
<!-- indicators -->
<path d="M414 32.2L425.8 25.4" stroke="#4cc35c" stroke-width="1.2"/>
<path d="M413.6 33.4q2-3.4 3.6-6.4t2.8-.8 1.6 3.6 2.6 -2.4 2.4-4.6" stroke="#3d7fc1" stroke-width="1.2" fill="none"/>
<path d="M431.1 27.1h5.6l-2.8 3.2z" fill="#000"/>
<!-- screenshot -->
<path d="M444.4 35.2V22.4H457.6V27" stroke="#3d7fc1" stroke-width="1.1" stroke-dasharray="1.1 1.3" fill="none"/>
<path d="M448 35h9.4q.6 0 .6-.6V29.4q0-.6-.6-.6h-1.6l-1.2-1.6h-3.6l-1.2 1.6h-1.8q-.6 0-.6.6v5q0 .6.6.6z" fill="#d8ebfa" stroke="#3d7fc1" stroke-width="1.2"/>
<circle cx="452.6" cy="31.6" r="1.2" fill="#fff" stroke="#3d7fc1" stroke-width="1"/>
<!-- toolbar boundary -->
<rect x="462.9" y="17.8" width="1" height="22.2" fill="#c4c4c4"/><rect x="463.9" y="18" width="1" height="22" fill="#fcfcfc"/>
<path d="M466 19V39" stroke="#c4c4c4" stroke-width="1" stroke-dasharray="1 1"/>
<!-- cursor selected -->
<rect x="471.2" y="19.3" width="21.8" height="18.6" fill="#c9dff4" stroke="#a9d0f5" stroke-width="0.6"/>
<path d="M477.2 24.2L486 27.6L482.6 29.2L486.6 32.6L485.6 33.4L481.8 30.2L480.2 33.2Z" fill="#cfe6fa" stroke="#3d7fc1" stroke-width="1.2" stroke-linejoin="round"/>
<!-- crosshair -->
<path d="M504.7 22.8V34.4M498.8 28.6H510.7" stroke="#3d7fc1" stroke-width="1.2"/>
<circle cx="504.7" cy="28.6" r="1.3" fill="#d8ebfa" stroke="#3d7fc1" stroke-width="1.1"/>
<rect x="517.3" y="20.2" width="1.2" height="17.5" fill="#a8a8a8"/>
<!-- object tools -->
<g stroke="#3d7fc1" stroke-width="1.2" fill="none">
<path d="M531.1 22.1V35.1M547.3 28.6H560.7M571.5 33.6L581.9 23.6M594.5 29.2L600.4 23.6M598.9 33.6L606.7 26.2M685.8 33.6L696.2 23.6"/>
<path d="M616 26.3H629M616 33.5H629M640.6 24.5H649.9M645.2 24.5V33.3"/>
<path d="M616 22.8H629M616 29.9H629" stroke="#7eaadb" stroke-width="1.4"/>
<path d="M662.7 28.4L668.3 24.3L673.9 28.4Q668.3 36.4 662.7 28.4Z"/>
<rect x="708.8" y="24.3" width="10.4" height="8.6"/>
<path d="M692.4 24.8H695.6V28"/>
</g>
<g fill="#e6f1fb" stroke="#3d7fc1" stroke-width="1.1">
<circle cx="531.1" cy="28.6" r="1.6"/><circle cx="554" cy="28.6" r="1.6"/>
<circle cx="571.5" cy="33.6" r="1.6"/><circle cx="581.9" cy="23.6" r="1.6"/>
<circle cx="594.5" cy="29.2" r="1.6"/><circle cx="600.4" cy="23.6" r="1.6"/><circle cx="598.9" cy="33.6" r="1.6"/>
<circle cx="628" cy="26.3" r="1.6"/><circle cx="617.2" cy="33.5" r="1.6"/>
<circle cx="662.7" cy="28.4" r="1.5"/><circle cx="668.3" cy="24.3" r="1.5"/><circle cx="673.9" cy="28.4" r="1.5"/>
<circle cx="685.8" cy="33.6" r="1.6"/><circle cx="696.2" cy="23.6" r="1.6"/>
<circle cx="708.8" cy="24.3" r="1.6"/><circle cx="719.2" cy="24.3" r="1.6"/><circle cx="708.8" cy="32.9" r="1.6"/><circle cx="719.2" cy="32.9" r="1.6"/>
</g>
<rect x="726" y="17.8" width="1" height="22.2" fill="#c4c4c4"/><rect x="727" y="18" width="1" height="22" fill="#fcfcfc"/>
<path d="M729.3 19V39" stroke="#c4c4c4" stroke-width="1" stroke-dasharray="1 1"/>
<!-- timeframes -->
<rect x="871.3" y="19.3" width="21.8" height="18.6" fill="#c9dff4" stroke="#a9d0f5" stroke-width="0.6"/>
<g fill="#2f6fb4" font-size="9.2" stroke="#2f6fb4" stroke-width="0.3">
<text x="739.2" y="32.1" textLength="11.9" lengthAdjust="spacingAndGlyphs">M1</text>
<text x="762.2" y="32.1" textLength="11.9" lengthAdjust="spacingAndGlyphs">M5</text>
<text x="782.6" y="32.1" textLength="16.4" lengthAdjust="spacingAndGlyphs">M15</text>
<text x="805.6" y="32.1" textLength="16.6" lengthAdjust="spacingAndGlyphs">M30</text>
<text x="831.5" y="32.1" textLength="10" lengthAdjust="spacingAndGlyphs">H1</text>
<text x="854.3" y="32.1" textLength="10.7" lengthAdjust="spacingAndGlyphs">H4</text>
<text x="877.2" y="32.1" textLength="10" lengthAdjust="spacingAndGlyphs">D1</text>
<text x="899.1" y="32.1" textLength="11.9" lengthAdjust="spacingAndGlyphs">W1</text>
<text x="921.3" y="32.1" textLength="14.1" lengthAdjust="spacingAndGlyphs">MN</text>
</g>
<rect x="940.2" y="17.8" width="1" height="22.2" fill="#c4c4c4"/><rect x="941.2" y="18" width="1" height="22" fill="#fcfcfc"/>
<!-- search -->
<circle cx="1025.2" cy="28.3" r="3.9" fill="none" stroke="#2e2e2e" stroke-width="1.2"/>
<path d="M1028 31.2l2 2.2" stroke="#2e2e2e" stroke-width="1.3"/>
<!-- account -->
<circle cx="1048" cy="29.2" r="4.2" fill="none" stroke="#333" stroke-width="1.1"/>
<circle cx="1048" cy="28" r="1.5" fill="none" stroke="#333" stroke-width="1"/>
<path d="M1045.2 32.2q2.8-2.6 5.6 0" fill="none" stroke="#333" stroke-width="1"/>
<circle cx="1055.4" cy="26.2" r="5.5" fill="#e23b23"/>
<text x="1055.4" y="29.8" font-size="9" font-weight="bold" fill="#fff" text-anchor="middle">1</text>
<!-- LVL -->
<path d="M1078.8 22.8l3.2 3-3.2 3-3.2-3z" fill="#2fb54a"/>
<path d="M1078.8 24.6v2.6M1077.6 25.8h2.4" stroke="#fff" stroke-width="0.6"/>
<text x="1074" y="34" font-size="5.4" font-weight="bold" fill="#2fb54a" textLength="9.3" lengthAdjust="spacingAndGlyphs">LVL</text>
<!-- progress -->
<rect x="1090.5" y="24.4" width="31.8" height="9.8" fill="#fff" stroke="#8c8c8c" stroke-width="0.9"/>
<rect x="1091" y="24.9" width="8" height="8.8" fill="#35dc35"/>
<!-- chart title icons -->
<rect x="8" y="46.6" width="5.6" height="6.8" rx="0.8" fill="#f3a6a0" stroke="#e06055" stroke-width="0.7"/>
<rect x="13.6" y="46.6" width="5.6" height="6.8" rx="0.8" fill="#a8cdf0" stroke="#4a8ad0" stroke-width="0.7"/>
<path d="M9.2 48.6h3.2M9.2 50h3.2M9.2 51.4h3.2" stroke="#fff" stroke-width="0.6"/>
<path d="M14.8 48.6h3.2M14.8 50h3.2M14.8 51.4h3.2" stroke="#fff" stroke-width="0.6"/>
<path d="M23.8 47v6.4h5v-3.6l-2.2-.6v-2.2z" fill="#f3a6a0" stroke="#e06055" stroke-width="0.7"/>
<path d="M29.6 53.4h4.8v-6.8l-2 .6v2.4l-2.8 1z" fill="#a8cdf0" stroke="#4a8ad0" stroke-width="0.7"/>
</g>

<rect x="0" y="0" width="1129" height="2" fill="#3d6cc6"/>
<rect x="0" y="0" width="2" height="596" fill="#3d6cc6"/>
<rect x="1127" y="0" width="2" height="596" fill="#3d6cc6"/>
<rect x="0" y="593.7" width="1129" height="2.3" fill="#3d6cc6"/></svg>
</body></html>
